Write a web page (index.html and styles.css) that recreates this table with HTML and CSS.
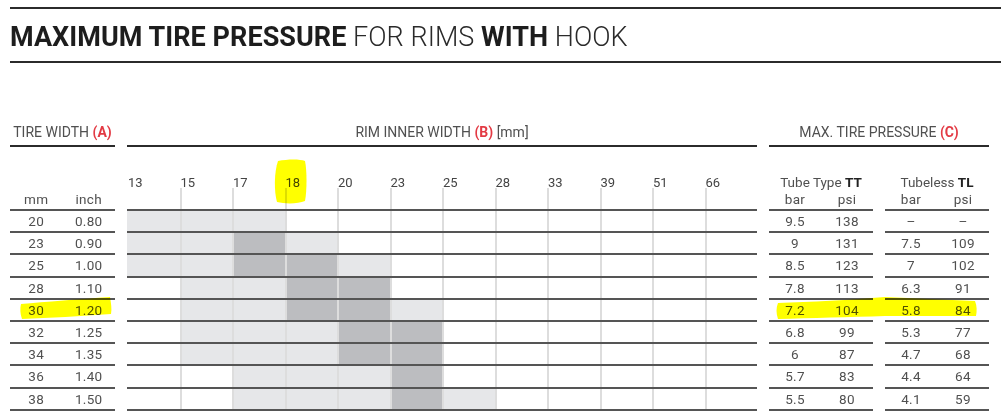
FILE: index.html
```html
<!DOCTYPE html>
<html lang="en">
<head>
<meta charset="utf-8">
<title>Maximum tire pressure for rims with hook</title>
<link rel="stylesheet" href="styles.css">
</head>
<body>
<div class="page">
  <div class="rule rule-top"></div>
  <h1 class="title"><b>MAXIMUM TIRE PRESSURE</b> FOR RIMS <b>WITH</b> HOOK</h1>
  <div class="rule"></div>

  <div class="chart">
    <section class="sec sec-width">
      <div class="sec-head">TIRE WIDTH <span class="ref">(A)</span></div>
      <div class="sub sub-width"><span>mm</span><span>inch</span></div>
      <div class="row"><span>20</span><span>0.80</span></div>
      <div class="row"><span>23</span><span>0.90</span></div>
      <div class="row"><span>25</span><span>1.00</span></div>
      <div class="row"><span>28</span><span>1.10</span></div>
      <div class="row"><span>30</span><span>1.20</span></div>
      <div class="row"><span>32</span><span>1.25</span></div>
      <div class="row"><span>34</span><span>1.35</span></div>
      <div class="row"><span>36</span><span>1.40</span></div>
      <div class="row"><span>38</span><span>1.50</span></div>
    </section>

    <section class="sec sec-rim">
      <div class="sec-head">RIM INNER WIDTH <span class="ref">(B)</span> [mm]</div>
      <div class="sub sub-rim">
        <div class="cl"><span>13</span><i></i></div>
        <div class="cl"><span>15</span><i></i></div>
        <div class="cl"><span>17</span><i></i></div>
        <div class="cl"><span>18</span><i></i></div>
        <div class="cl"><span>20</span><i></i></div>
        <div class="cl"><span>23</span><i></i></div>
        <div class="cl"><span>25</span><i></i></div>
        <div class="cl"><span>28</span><i></i></div>
        <div class="cl"><span>33</span><i></i></div>
        <div class="cl"><span>39</span><i></i></div>
        <div class="cl"><span>51</span><i></i></div>
        <div class="cl"><span>66</span><i></i></div>
      </div>
      <div class="row grid-row"><i class="L"></i><i class="L"></i><i class="L"></i><i></i><i></i><i></i><i></i><i></i><i></i><i></i><i></i><i></i></div>
      <div class="row grid-row"><i class="L"></i><i class="L"></i><i class="D"></i><i class="L"></i><i></i><i></i><i></i><i></i><i></i><i></i><i></i><i></i></div>
      <div class="row grid-row"><i class="L"></i><i class="L"></i><i class="D"></i><i class="D"></i><i class="L"></i><i></i><i></i><i></i><i></i><i></i><i></i><i></i></div>
      <div class="row grid-row"><i></i><i class="L"></i><i class="L"></i><i class="D"></i><i class="D"></i><i></i><i></i><i></i><i></i><i></i><i></i><i></i></div>
      <div class="row grid-row"><i></i><i class="L"></i><i class="L"></i><i class="D"></i><i class="D"></i><i class="L"></i><i></i><i></i><i></i><i></i><i></i><i></i></div>
      <div class="row grid-row"><i></i><i class="L"></i><i class="L"></i><i class="L"></i><i class="D"></i><i class="D"></i><i></i><i></i><i></i><i></i><i></i><i></i></div>
      <div class="row grid-row"><i></i><i class="L"></i><i class="L"></i><i class="L"></i><i class="D"></i><i class="D"></i><i></i><i></i><i></i><i></i><i></i><i></i></div>
      <div class="row grid-row"><i></i><i></i><i class="L"></i><i class="L"></i><i class="L"></i><i class="D"></i><i></i><i></i><i></i><i></i><i></i><i></i></div>
      <div class="row grid-row"><i></i><i></i><i class="L"></i><i class="L"></i><i class="L"></i><i class="D"></i><i class="L"></i><i></i><i></i><i></i><i></i><i></i></div>
    </section>

    <section class="sec sec-press">
      <div class="sec-head">MAX. TIRE PRESSURE <span class="ref">(C)</span></div>
      <div class="groups">
        <div class="group">
          <div class="sub sub-press">
            <div>Tube Type <b>TT</b></div>
            <div class="units"><span>bar</span><span>psi</span></div>
          </div>
          <div class="row"><span>9.5</span><span>138</span></div>
          <div class="row"><span>9</span><span>131</span></div>
          <div class="row"><span>8.5</span><span>123</span></div>
          <div class="row"><span>7.8</span><span>113</span></div>
          <div class="row"><span>7.2</span><span>104</span></div>
          <div class="row"><span>6.8</span><span>99</span></div>
          <div class="row"><span>6</span><span>87</span></div>
          <div class="row"><span>5.7</span><span>83</span></div>
          <div class="row"><span>5.5</span><span>80</span></div>
        </div>
        <div class="group">
          <div class="sub sub-press">
            <div>Tubeless <b>TL</b></div>
            <div class="units"><span>bar</span><span>psi</span></div>
          </div>
          <div class="row"><span>–</span><span>–</span></div>
          <div class="row"><span>7.5</span><span>109</span></div>
          <div class="row"><span>7</span><span>102</span></div>
          <div class="row"><span>6.3</span><span>91</span></div>
          <div class="row"><span>5.8</span><span>84</span></div>
          <div class="row"><span>5.3</span><span>77</span></div>
          <div class="row"><span>4.7</span><span>68</span></div>
          <div class="row"><span>4.4</span><span>64</span></div>
          <div class="row"><span>4.1</span><span>59</span></div>
        </div>
      </div>
    </section>
  </div>

  <svg class="marks" width="1001" height="411" viewBox="0 0 1001 411" aria-hidden="true">
    <path d="M278,161 C288,159 300,159 305,161 C307,170 307,191 305,201 C298,204 285,204 277,202 C274,192 274,172 278,161 Z"/>
    <path d="M21,304 C45,302 80,299 110,297 C111,303 112,309 111,314 C80,316 50,318 22,319 C20,314 20,308 21,304 Z"/>
    <path d="M778,303 C810,302 850,300 885,297 C915,298 945,300 975,301 C977,306 977,311 976,316 C945,316 915,316 885,316 C850,317 810,318 778,319 C776,313 776,308 778,303 Z"/>
  </svg>
</div>
</body>
</html>
```

FILE: styles.css
```css
html, body {
  margin: 0;
  padding: 0;
  background: #ffffff;
}

body {
  font-family: Roboto, "DejaVu Sans", sans-serif;
  color: #505050;
}

.page {
  position: relative;
  width: 1001px;
  height: 411px;
  overflow: hidden;
  padding-left: 10px;
  box-sizing: border-box;
}

.rule {
  height: 2px;
  background: #2b2b2b;
}

.rule-top {
  margin-top: 7px;
}

.title {
  margin: 12px 0 8px;
  height: 32px;
  font-size: 27px;
  line-height: 32px;
  font-weight: 300;
  letter-spacing: 0.05px;
  color: #2a2a2a;
  white-space: nowrap;
}

.title b {
  font-weight: 700;
  color: #1d1d1d;
}

.chart {
  display: flex;
  gap: 12px;
  padding-top: 61px;
}

.sec-width { width: 105px; }
.sec-rim { width: 630px; }
.sec-press { width: 220px; }

.sec-head {
  text-align: center;
  font-size: 14px;
  line-height: 16px;
  padding-bottom: 5px;
  border-bottom: 2px solid #2b2b2b;
  white-space: nowrap;
}

.ref {
  color: #e33a44;
  font-weight: 700;
}

.sub {
  height: 62px;
  box-sizing: border-box;
  font-size: 13.5px;
}

.sub-width {
  display: flex;
  align-items: flex-end;
  padding-bottom: 2px;
  line-height: 16px;
  letter-spacing: 0.3px;
}

.sub-width span,
.row span,
.units span {
  flex: 1;
  text-align: center;
}

.row {
  display: flex;
  align-items: center;
  height: 22.2px;
  box-sizing: border-box;
  border-top: 2px solid #555555;
  font-size: 13.5px;
  line-height: 16px;
  letter-spacing: 0.3px;
}

.row:last-child {
  height: 24.2px;
  border-bottom: 2px solid #555555;
}

/* rim grid */
.sub-rim {
  display: grid;
  grid-template-columns: repeat(12, 1fr);
}

.cl {
  display: flex;
  flex-direction: column;
  justify-content: flex-end;
}

.cl span {
  font-size: 13px;
  line-height: 11px;
  padding-left: 1px;
  color: #444444;
}

.cl i {
  display: block;
  height: 21px;
  border-left: 2px solid #dddddd;
}

.cl:first-child i {
  border-left-color: transparent;
}

.grid-row {
  display: grid;
  grid-template-columns: repeat(12, 1fr);
  align-items: stretch;
}

.grid-row i {
  display: block;
  border-left: 2px solid #dddddd;
}

.grid-row i:first-child {
  border-left: 0;
}

.grid-row .L { background: #e6e7e9; }
.grid-row .D { background: #bcbdc0; }

/* pressure */
.groups {
  display: flex;
  gap: 12px;
}

.group {
  width: 104px;
}

.sub-press {
  display: flex;
  flex-direction: column;
  justify-content: flex-end;
  padding-bottom: 1px;
  text-align: center;
  line-height: 17px;
}

.sub-press b {
  color: #222222;
  font-weight: 700;
}

.units {
  display: flex;
  letter-spacing: 0.3px;
}

.marks {
  position: absolute;
  top: 0;
  left: 0;
  pointer-events: none;
  mix-blend-mode: multiply;
}

.marks path {
  fill: #ffff00;
}
```
